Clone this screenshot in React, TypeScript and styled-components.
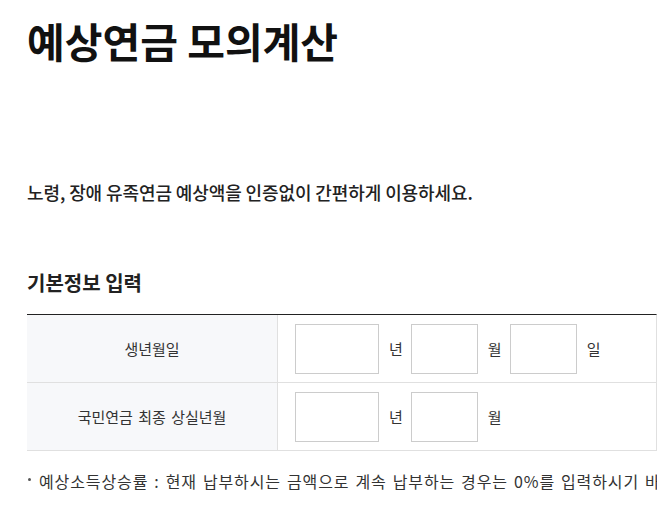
import styled, { createGlobalStyle } from 'styled-components'

const GlobalStyle = createGlobalStyle`
    html, body {
        margin: 0;
        padding: 0;
        overflow: hidden;
        background: #fff;
    }
    body {
        font-family: "Noto Sans CJK KR", "Noto Sans", sans-serif;
        color: #222;
    }
`;

const Page = styled.div`
    padding: 0 0 0 27px;
    width: 630px;
`;

const Title = styled.h1`
    margin: 14px 0 0;
    font-size: 41px;
    line-height: 52px;
    font-weight: 700;
    color: #111;
`;

const Lead = styled.p`
    margin: 113px 0 0;
    font-size: 18px;
    line-height: 26px;
    font-weight: 500;
    letter-spacing: -0.1px;
    color: #222;
`;

const SectionTitle = styled.h2`
    margin: 64px 0 0;
    font-size: 20px;
    line-height: 28px;
    font-weight: 700;
    color: #222;
`;

const Table = styled.div`
    margin-top: 17px;
    border-top: 1px solid #222;
    border-right: 1px solid #e0e0e0;
`;

const Row = styled.div`
    display: grid;
    grid-template-columns: 251px 1fr;
    height: 67px;
    border-bottom: 1px solid #e0e0e0;
`;

const Label = styled.div`
    display: flex;
    align-items: center;
    justify-content: center;
    background: #f7f8fa;
    border-right: 1px solid #e0e0e0;
    font-size: 15px;
    word-spacing: 2px;
    color: #333;
`;

const Fields = styled.div`
    display: flex;
    align-items: center;
    gap: 8px;
    padding-left: 17px;
`;

const Field = styled.label`
    display: flex;
    align-items: center;
    gap: 10px;
    font-size: 15px;
    color: #333;
`;

const Box = styled.input<{ $w: number }>`
    box-sizing: border-box;
    width: ${p => p.$w}px;
    height: 50px;
    border: 1px solid #cccccc;
    background: #fff;
    outline: none;
    margin: 0;
    padding: 0 8px;
    font-family: inherit;
    font-size: 15px;
`;

const Note = styled.p`
    margin: 19px 0 0;
    display: flex;
    gap: 6px;
    white-space: nowrap;
    font-size: 16px;
    line-height: 22px;
    letter-spacing: 0.9px;
    word-spacing: 1.5px;
    color: #333;
    width: 780px;
`;

const Dot = styled.span`
    flex: none;
    width: 3px;
    height: 3px;
    margin: 8px 2px 0 1px;
    border-radius: 50%;
    background: #555;
`;

export default function App() {
    return (
        <>
            <GlobalStyle />
            <Page>
                <Title>예상연금 모의계산</Title>
                <Lead>노령, 장애 유족연금 예상액을 인증없이 간편하게 이용하세요.</Lead>
                <SectionTitle>기본정보 입력</SectionTitle>
                <Table>
                    <Row>
                        <Label>생년월일</Label>
                        <Fields>
                            <Field><Box $w={84} />년</Field>
                            <Field><Box $w={67} />월</Field>
                            <Field><Box $w={67} />일</Field>
                        </Fields>
                    </Row>
                    <Row>
                        <Label>국민연금 최종 상실년월</Label>
                        <Fields>
                            <Field><Box $w={84} />년</Field>
                            <Field><Box $w={67} />월</Field>
                        </Fields>
                    </Row>
                </Table>
                <Note>
                    <Dot />
                    <span>예상소득상승률 : 현재 납부하시는 금액으로 계속 납부하는 경우는 0%를 입력하시기 바랍니다.</span>
                </Note>
            </Page>
        </>
    )
}
